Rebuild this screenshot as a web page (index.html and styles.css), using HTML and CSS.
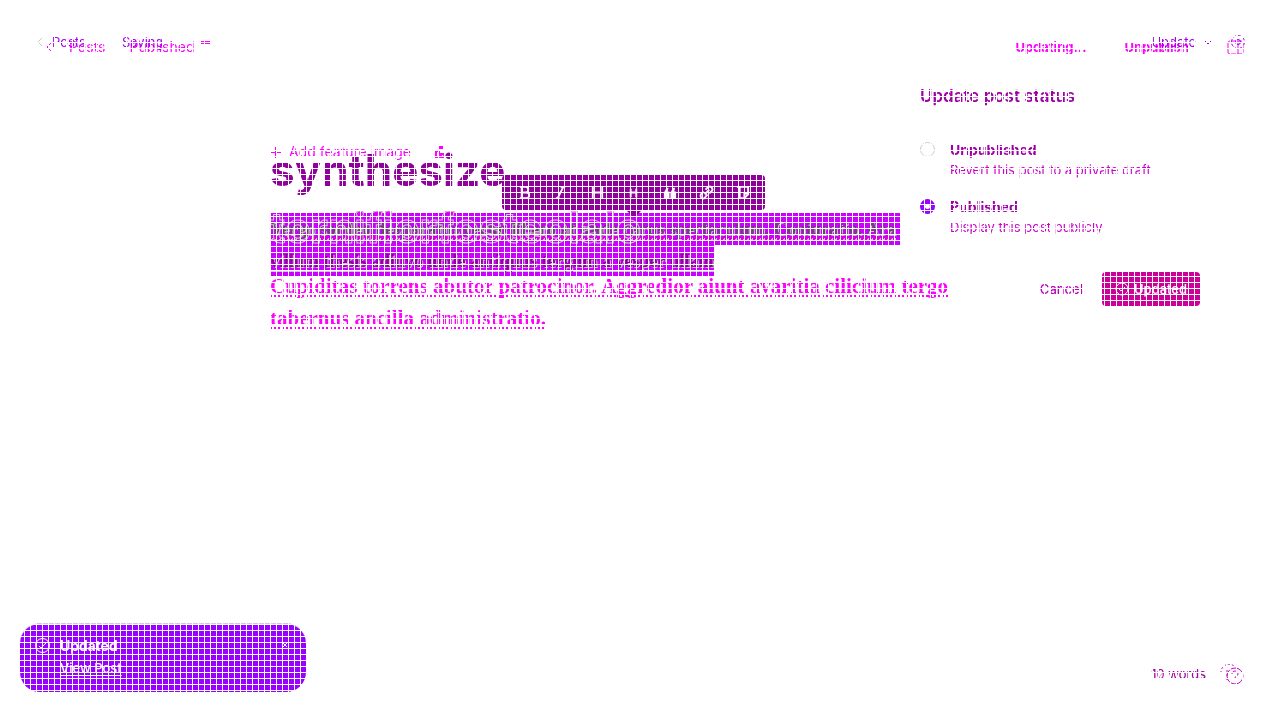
FILE: index.html
```
<!DOCTYPE html>
<html lang="en">
<head>
<meta charset="utf-8">
<title>Post editor</title>
<link rel="stylesheet" href="styles.css">
</head>
<body>
<main class="stage">
  <section class="layer base">
    <header class="bar bar-low">
      <nav class="crumbs">
        <a class="back" href="#"><svg width="6" height="10" viewBox="0 0 6 10"><path d="M5 1 1 5l4 4"/></svg>Posts</a>
        <span>Published</span>
      </nav>
      <div class="actions">
        <button>Updating...</button><button>Unpublish</button>
        <button aria-label="Settings panel"><svg width="17" height="15" viewBox="0 0 17 15"><rect x="1" y="1" width="15" height="13" rx="2"/><path d="M11 1v13"/></svg></button>
      </div>
    </header>
    <article class="canvas canvas-base">
      <button class="feature"><svg width="11" height="11" viewBox="0 0 11 11"><path d="M5.500 0v11M0 5.500h11"/></svg>Add feature image<svg class="unsplash" width="11" height="12" viewBox="0 0 11 12"><path d="M4 0h3v2H4zM1 5v6h8V8H6v2H4V5z"/></svg></button>
      <h2 class="outline-title">tornifiorfosteolalo</h2>
      <p class="copy">Cupiditas torrens abutor patrocinor. Aggredior aiunt avaritia cilicium tergo<br>tabernus ancilla administratio.</p>
    </article>
  </section>

  <section class="layer over">
    <header class="bar bar-high">
      <nav class="crumbs">
        <a class="back" href="#"><svg width="6" height="10" viewBox="0 0 6 10"><path d="M5 1 1 5l4 4"/></svg>Posts</a>
        <span>Saving</span><i class="dash"></i>
      </nav>
      <div class="actions">
        <button>Update <svg width="8" height="5" viewBox="0 0 8 5"><path d="m1 1 3 3 3-3"/></svg></button>
        <button aria-label="Settings"><svg width="16" height="16" viewBox="0 0 16 16"><circle cx="8" cy="8" r="6.500" stroke-dasharray="3 2"/><circle cx="8" cy="8" r="2.500"/></svg></button>
      </div>
    </header>
    <article class="canvas canvas-over">
      <h1 class="title">synthesize</h1>
      <div class="selected"><mark class="first">Vergo sordeo desparatus cerno libero at unde carus spectaculum. Coniuratio. Ara</mark><mark class="second">villum thesis adiuvo unde antiquus tergum a vesper ullam</mark></div>
    </article>
  </section>

  <div class="toolbar">
    <button aria-label="Bold"><svg viewBox="0 0 16 16"><path d="M3 2h6a3 3 0 0 1 0 6H5h5a3 3 0 0 1 0 6H3M5 2v12"/></svg></button>
    <button aria-label="Italic"><svg viewBox="0 0 16 16"><path d="M8 2h5M3 14h4M11 2 5 14"/></svg></button>
    <button aria-label="Heading"><svg viewBox="0 0 16 16"><path d="M3 2v12M13 2v12M3 8h10"/></svg></button>
    <button aria-label="Subheading"><svg viewBox="0 0 16 16"><path d="M5 4v9M11 4v9M5 8h6"/></svg></button>
    <button aria-label="Quote"><svg class="solid" viewBox="0 0 16 16"><path d="M2 14V8l3-5h2L6 7h2v7zM9 14V8l3-5h2l-1 4h2v7z"/></svg></button>
    <button aria-label="Link"><svg viewBox="0 0 16 16"><path d="m6 10 5-5M7 5l3-3a3 3 0 0 1 4 4l-3 3M9 10l-3 4a3 3 0 0 1-4-4l3-3"/></svg></button>
    <button aria-label="Save snippet"><svg viewBox="0 0 16 16"><path d="M2 2h12v8l-4 4H5V2M14 9h-4v5"/></svg></button>
  </div>

  <form class="status">
    <h2>Update post status</h2>
    <div class="option"><input type="radio" name="status" id="un"><label for="un"><b>Unpublished</b><span>Revert this post to a private draft</span></label></div>
    <div class="option"><input type="radio" name="status" id="pub" checked><label for="pub"><b>Published</b><span>Display this post publicly</span></label></div>
    <div class="buttons"><button type="button" class="cancel">Cancel</button><button type="button" class="updated"><svg width="14" height="14" viewBox="0 0 14 14"><circle cx="7" cy="7" r="6"/><path d="m4 7 2 2 4-4"/></svg>Updated</button></div>
  </form>

  <aside class="toast">
    <svg width="17" height="17" viewBox="0 0 17 17"><circle cx="8.500" cy="8.500" r="7"/><path d="m5 9 2 2 5-5"/></svg>
    <div><strong>Updated</strong><a href="#">View Post</a></div>
    <button aria-label="Close"><svg width="6" height="6" viewBox="0 0 6 6"><path d="m1 1 4 4M5 1 1 5"/></svg></button>
  </aside>
  <footer class="count">
    <span class="number"><span>10 words</span><span class="shade" aria-hidden="true">12 words</span></span>
    <svg width="24" height="22" viewBox="0 0 24 22"><path class="faint" d="M1 9a8 8 0 0 1 14-6M7 16V6" /><circle cx="15" cy="12" r="8"/><path d="M12 10c0-4 6-4 6 0 0 2-3 2-3 4"/></svg>
  </footer>
</main>
</body>
</html>
```
FILE: styles.css
```
* { box-sizing: border-box; }
body { margin: 0; background: #fff; font: 13px/20px Inter, sans-serif; color: #c0c; }
button { font: inherit; color: inherit; background: none; border: 0; padding: 0; display: flex; align-items: center; gap: 8px; }
a { color: inherit; text-decoration: none; }
svg { fill: none; stroke: currentColor; stroke-width: 1; flex: none; }
h1, h2, p { margin: 0; }
.stage { position: relative; display: grid; min-height: 100vh; overflow: hidden; }
.stage::after { content: ""; position: absolute; z-index: 3; inset: 0; pointer-events: none; background: repeating-linear-gradient(90deg, #fff 0 1px, transparent 1px 6px), repeating-linear-gradient(#fff 0 1px, transparent 1px 6px); }
.layer { grid-area: 1 / 1; min-width: 0; }
.base { color: #f0f; }
.over { position: relative; pointer-events: none; }
.bar { display: flex; justify-content: space-between; height: 90px; }
.bar-low { padding: 37px 36px 0 46px; }
.bar-high { padding: 32px 34px 0 37px; color: #a000e8; }
.crumbs, .actions { display: flex; align-items: center; height: 20px; }
.crumbs { gap: 24px; }
.bar-low .crumbs { font-size: 14px; }
.back { display: flex; align-items: center; gap: 17px; }
.bar-high .crumbs { gap: 36px; }
.bar-high .back { gap: 9px; }
.bar-high .back svg { color: #c8c8c8; }
.dash { width: 9px; margin-left: 2px; border-top: 3px double #f0f; }
.actions { gap: 38px; }
.bar-low .actions { font-weight: 700; }
.bar-high .actions { gap: 18px; }
.canvas { width: 740px; max-width: 100%; margin: 0 auto; }
.canvas-base { padding-top: 52px; }
.feature { height: 20px; font-size: 14px; }
.unsplash { margin-left: 16px; stroke-width: 2; }
.outline-title { position: relative; z-index: 1; width: max-content; margin-top: 40px; font-size: 42px; line-height: 52px; color: transparent; background: linear-gradient(#f0f 0 11px, #c0f0 11px); background-clip: text; -webkit-background-clip: text; -webkit-text-stroke: 1px #c8c8c8; white-space: nowrap; }
.copy { margin-top: 16px; font: 600 21px/32px "Liberation Serif", serif; white-space: nowrap; text-decoration: underline dotted 2px; text-underline-offset: 2px; text-decoration-skip-ink: none; }
.canvas-over { padding-top: 54px; }
.title { font-size: 44px; line-height: 52px; color: #90009a; }
.selected { width: 630px; margin-top: 17px; font: 600 18px/32px "Liberation Serif", serif; white-space: nowrap; }
.selected mark { display: block; height: 32px; color: #90009a; background: #c0f; text-shadow: 1px 1px #c8c8c8; }
.selected .first { color: #704078; text-decoration: underline dotted #f000b4 2px; text-underline-offset: 2px; }
.selected .second { width: 444px; text-decoration: underline #c8c8c8 1px; text-underline-offset: 3px; }
.toolbar { position: absolute; z-index: 2; top: 175px; left: 502px; width: 263px; height: 35px; padding: 0 4px; display: flex; border-radius: 4px; background: #90009a; color: #fff; }
.toolbar::after { content: ""; position: absolute; top: 100%; left: 50%; margin-left: -8px; border: 8px solid transparent; border-top-color: #90009a; border-bottom: 0; }
.toolbar button { flex: 1; justify-content: center; }
.toolbar svg { width: 15px; height: 15px; stroke-width: 2; }
.toolbar .solid { fill: currentColor; stroke: none; }
.status { position: absolute; top: 84px; right: 80px; width: 280px; }
.status h2 { font-size: 17px; line-height: 24px; font-weight: 600; color: #a000a8; margin-bottom: 32px; }
.option { display: flex; gap: 15px; margin-bottom: 17px; }
.option input { appearance: none; width: 15px; height: 15px; margin: 2px 0 0; border: 1px solid #ccc; border-radius: 50%; }
.option input:checked { border: 5px solid #90f; }
.option b, .option span { display: block; }
.option b { font-size: 14px; font-weight: 700; color: #a000a8; }
.buttons { display: flex; justify-content: flex-end; gap: 19px; margin-top: 35px; font-weight: 500; }
.cancel { color: #b0b; }
.updated { width: 98px; height: 34px; justify-content: center; gap: 5px; border-radius: 4px; background: #c09; color: #fff; }
.toast { position: absolute; left: 20px; bottom: 28px; width: 286px; height: 69px; padding: 12px 18px 0 14px; display: flex; align-items: flex-start; gap: 9px; border-radius: 20px; border-top: 1px solid #ccc; background: #90f; color: #fff; }
.toast > svg { margin-top: 1px; }
.toast div { flex: 1; }
.toast strong, .toast a { display: block; width: max-content; font-size: 14px; font-weight: 600; }
.toast a { margin-top: 2px; font-size: 13px; font-weight: 500; text-decoration: underline; text-underline-offset: 2px; }
.toast button { margin-top: 6px; }
.count { position: absolute; right: 36px; bottom: 34px; display: flex; align-items: center; gap: 14px; }
.number { display: grid; }
.number span { grid-area: 1 / 1; }
.number .shade { padding-bottom: 2px; color: #c8c8c8; mix-blend-mode: multiply; }
.faint { stroke-dasharray: 2 2; }
```
